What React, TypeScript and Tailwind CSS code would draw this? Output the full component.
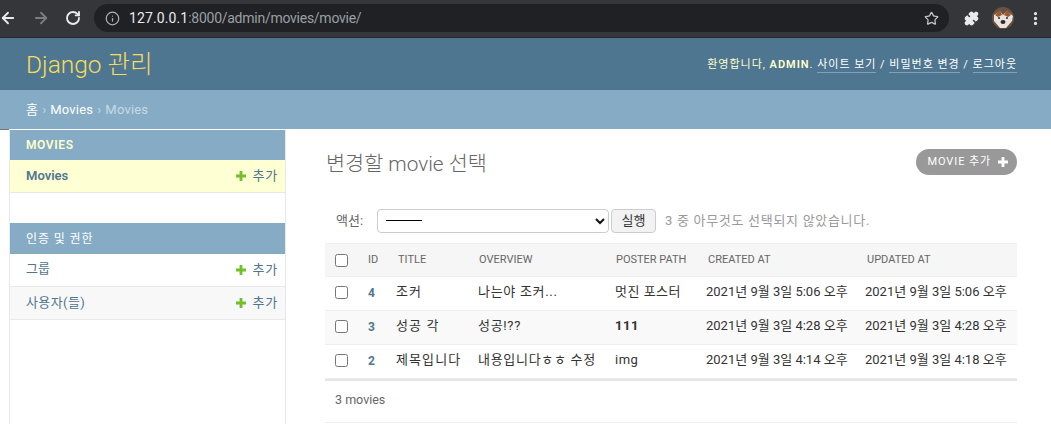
import { ArrowLeft, ArrowRight, Info, MoreVertical, Puzzle, RotateCw, Star } from "lucide-react"

const FONT = "font-['Roboto','Noto_Sans_CJK_KR',sans-serif]"

const rows = [
  { id: "4", title: "조커", overview: "나는야 조커...", poster: "멋진 포스터", created: "2021년 9월 3일 5:06 오후", updated: "2021년 9월 3일 5:06 오후", alt: false },
  { id: "3", title: "성공 각", overview: "성공!??", poster: "111", created: "2021년 9월 3일 4:28 오후", updated: "2021년 9월 3일 4:28 오후", alt: true },
  { id: "2", title: "제목입니다", overview: "내용입니다ㅎㅎ 수정", poster: "img", created: "2021년 9월 3일 4:14 오후", updated: "2021년 9월 3일 4:18 오후", alt: false },
]

function Plus({ color, size = 10 }: { color: string; size?: number }) {
  return (
    <svg width={size} height={size} viewBox="0 0 10 10" className="shrink-0">
      <path d="M3.6 0h2.8v3.6H10v2.8H6.4V10H3.6V6.4H0V3.6h3.6z" fill={color} />
    </svg>
  )
}

function Checkbox() {
  return <span className="block h-[13px] w-[13px] rounded-[2.5px] border border-[#767676] bg-white" />
}

function AddLink() {
  return (
    <span className="flex items-center gap-[6px] text-[13px] tracking-[0.8px] text-[#4f7690]">
      <Plus color="#70bf2b" />
      추가
    </span>
  )
}

function BrowserBar() {
  return (
    <div className="flex h-[38px] items-center border-b border-[#26272a] bg-[#35363a] pb-[1px]">
      <div className="flex w-[94px] items-center text-white">
        <ArrowLeft size={18} strokeWidth={2.4} className="-ml-[1px] text-[#e8eaed]" />
        <ArrowRight size={18} strokeWidth={2.4} className="ml-[15px] text-[#7c7d80]" />
        <RotateCw size={16} strokeWidth={2.8} className="ml-[15px] text-[#e8eaed]" />
      </div>
      <div className="flex h-[28px] w-[855px] items-center rounded-full bg-[#202124] pl-[11px] pr-[10px]">
        <Info size={15} className="text-[#b0b2b5]" />
        <span className="ml-[9px] font-['Roboto',sans-serif] text-[14px] tracking-[0.1px] text-[#e8eaed]">
          127.0.0.1<span className="tracking-[-0.26px] text-[#9aa0a6]">:8000/admin/movies/movie/</span>
        </span>
        <Star size={15} strokeWidth={2} className="ml-auto text-[#c4c7c9]" />
      </div>
      <Puzzle size={15} fill="#e8eaed" className="ml-[15px] text-[#e8eaed]" />
      <svg width="22" height="22" viewBox="0 0 22 22" className="ml-[13px]">
        <circle cx="11" cy="11" r="11" fill="#6b5140" />
        <path d="M2 8 L8 4 L11 8 L15 4 L21 9 L20 14 L14 21 L8 21 L2 14z" fill="#e9e4de" />
        <path d="M3 8 L8 3 L10 8 L6 10z M19 8 L15 3 L12 8 L16 10z" fill="#9c5a32" />
        <ellipse cx="11" cy="15" rx="2.5" ry="2" fill="#2a2a2c" />
        <circle cx="7" cy="11" r="1" fill="#2a2a2c" />
        <circle cx="15" cy="11" r="1" fill="#2a2a2c" />
      </svg>
      <MoreVertical size={17} strokeWidth={2.6} className="ml-[13px] text-[#e8eaed]" />
    </div>
  )
}

function Header() {
  return (
    <div className="flex h-[52px] items-center justify-between bg-[#4f7690] pl-[26px] pr-[34px]">
      <span className="pt-[3px] text-[24.5px] font-light text-[#f5dd5d]">Django 관리</span>
      <div className="flex items-center pt-[2px] text-[11px] tracking-[0.98px] text-[#ffffcc]">
        <span>환영합니다,&nbsp;</span>
        <span className="font-semibold">ADMIN</span>
        <span>.&nbsp;</span>
        <span className="border-b border-[#86a0b3] leading-[14px] text-white">사이트 보기</span>
        <span className="text-white">&nbsp;/&nbsp;</span>
        <span className="border-b border-[#86a0b3] leading-[14px] text-white">비밀번호 변경</span>
        <span className="text-white">&nbsp;/&nbsp;</span>
        <span className="border-b border-[#86a0b3] leading-[14px] text-white">로그아웃</span>
      </div>
    </div>
  )
}

function Sidebar() {
  return (
    <div className="flex shrink-0">
      <div className="h-[1px] w-[9px] bg-[#777]" />
      <aside className="flex w-[277px] flex-col border-x border-[#e8e8e8] pt-[1px] text-[13px]">
        <div className="flex h-[30px] items-center bg-[#85abc5] pl-[16px] text-[12px] font-semibold tracking-[0.6px] text-[#ffffcc]">MOVIES</div>
        <div className="flex h-[33px] items-center justify-between border-b border-[#e8e8e8] bg-[#ffffd4] pl-[16px] pr-[7px]">
          <span className="font-semibold text-[#4f7690]">Movies</span>
          <AddLink />
        </div>
        <div className="h-[30px]" />
        <div className="flex h-[31px] items-center bg-[#85abc5] pl-[16px] text-[12px] tracking-[0.9px] text-white">인증 및 권한</div>
        <div className="flex h-[33px] items-center justify-between border-b border-[#e8e8e8] bg-white pl-[16px] pr-[7px]">
          <span className="pb-[2px] text-[#4f7690]">그룹</span>
          <AddLink />
        </div>
        <div className="flex h-[33px] items-center justify-between border-b border-[#e8e8e8] bg-[#f8f8f8] pl-[16px] pr-[7px]">
          <span className="tracking-[0.4px] text-[#4f7690]">사용자(들)</span>
          <AddLink />
        </div>
      </aside>
    </div>
  )
}

function ChangeList() {
  return (
    <main className="ml-[39px] w-[692px] shrink-0">
      <div className="flex h-[70px] items-start justify-between pl-[1px] pt-[20px]">
        <h1 className="text-[20.75px] font-light leading-[30px] text-[#666]">변경할 movie 선택</h1>
        <span className="flex h-[26px] items-center gap-[7px] rounded-full bg-[#999] pl-[12px] pr-[9px] text-[11px] tracking-[0.9px] text-white">
          MOVIE 추가
          <Plus color="#fff" />
        </span>
      </div>
      <div className="flex h-[44px] items-center pb-[1px] pl-[11px] text-[13px] text-[#666]">
        <span className="w-[41px]">액션:</span>
        <span className="flex h-[24px] w-[232px] items-center justify-between rounded-[4px] border border-[#ccc] bg-white pl-[8px] pr-[3px]">
          <span className="h-[1px] w-[36px] bg-black" />
          <svg width="10" height="8" viewBox="0 0 10 8"><path d="M1 2l4 4 4-4" fill="none" stroke="#111" strokeWidth="2" /></svg>
        </span>
        <span className="ml-[2px] flex h-[24px] w-[45px] items-center justify-center rounded-[4px] border border-[#ccc] bg-[#f2f2f2] text-[#333]">실행</span>
        <span className="ml-[9px] text-[13px] tracking-[0.7px] text-[#999]">3 중 아무것도 선택되지 않았습니다.</span>
      </div>
      <table className="w-full table-fixed border-collapse text-[13px] text-[#333]">
        <colgroup>
          <col className="w-[43px]" />
          <col className="w-[28px]" />
          <col className="w-[82px]" />
          <col className="w-[137px]" />
          <col className="w-[91px]" />
          <col className="w-[159px]" />
          <col />
        </colgroup>
        <thead>
          <tr className="h-[33px] border-y border-[#eee] bg-[#f6f6f6] text-left text-[11px] font-normal text-[#666]">
            <th className="pl-[10px] font-normal"><Checkbox /></th>
            <th className="font-normal">ID</th>
            <th className="pl-[2px] font-normal">TITLE</th>
            <th className="pl-[1px] font-normal">OVERVIEW</th>
            <th className="pl-[1px] font-normal">POSTER PATH</th>
            <th className="pl-[2px] font-normal">CREATED AT</th>
            <th className="pl-[2px] font-normal">UPDATED AT</th>
          </tr>
        </thead>
        <tbody>
          {rows.map((row) => (
            <tr key={row.id} className={`h-[34px] border-b border-[#eee] ${row.alt ? "bg-[#f9f9f9]" : "bg-white"}`}>
              <td className="pb-[2px] pl-[10px]"><Checkbox /></td>
              <td className="pb-[2px] text-[12px] font-bold text-[#4f7690]">{row.id}</td>
              <td className="whitespace-nowrap pb-[3px] tracking-[1.1px]">{row.title}</td>
              <td className="whitespace-nowrap pb-[3px] tracking-[0.7px]">{row.overview}</td>
              <td className={`whitespace-nowrap pb-[3px] tracking-[0.5px] ${row.poster === "111" ? "font-bold" : ""}`}>{row.poster}</td>
              <td className="whitespace-nowrap pb-[3px]">{row.created}</td>
              <td className="whitespace-nowrap pb-[3px]">{row.updated}</td>
            </tr>
          ))}
        </tbody>
      </table>
      <div className="flex h-[44px] items-center border-t-2 border-b border-t-[#e4e4e4] border-b-[#eee] pb-[2px] pl-[10px] text-[12.5px] text-[#666]">3 movies</div>
    </main>
  )
}

export default function App() {
  return (
    <div className={`flex h-[424px] w-[1051px] flex-col overflow-hidden bg-white ${FONT}`}>
      <BrowserBar />
      <Header />
      <div className="flex h-[39px] items-center bg-[#85abc5] pl-[26px] pt-[1px] text-[13px] tracking-[0.2px] text-white">
        홈<span className="mx-[4px] text-[#c8dae6]">›</span>Movies<span className="mx-[4px] text-[#c8dae6]">›</span>
        <span className="text-[#c8dae6]">Movies</span>
      </div>
      <div className="flex flex-1">
        <Sidebar />
        <ChangeList />
      </div>
    </div>
  )
}
